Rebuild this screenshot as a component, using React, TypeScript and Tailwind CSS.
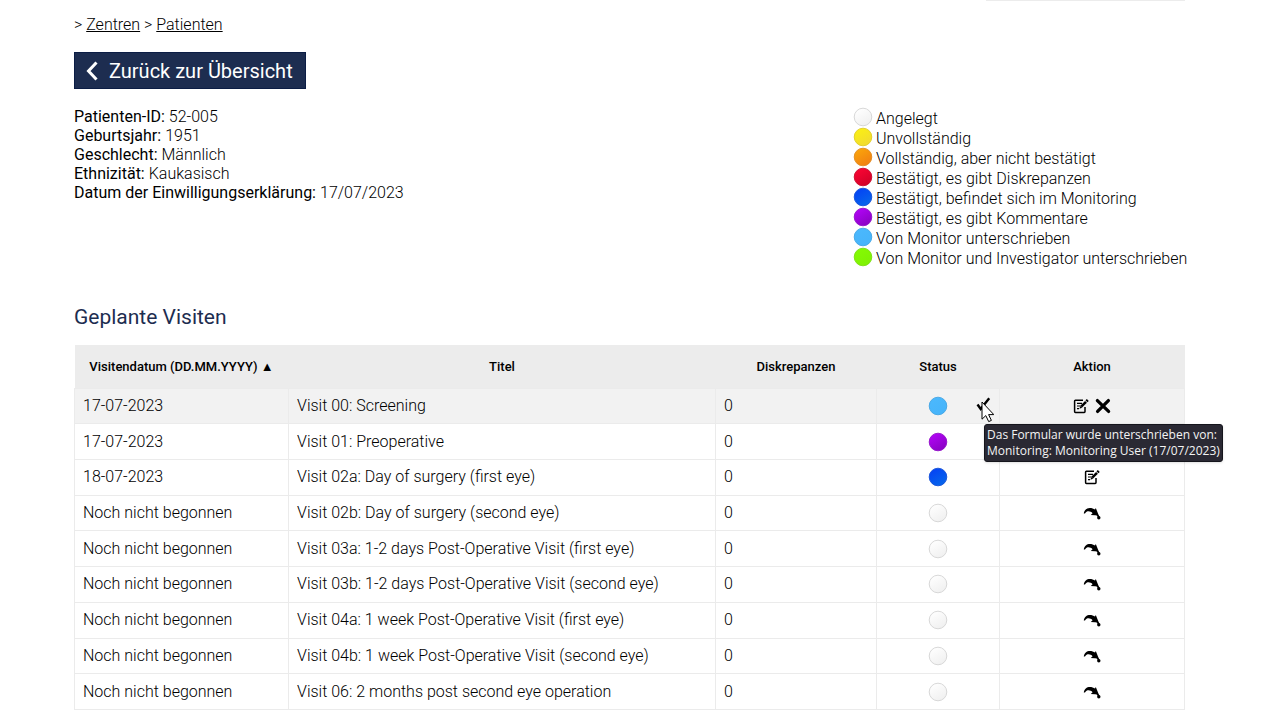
import { useId } from "react";

type Status = "created" | "incomplete" | "complete" | "discrepancy" | "monitoring" | "comments" | "monitor" | "signed";

const colors: Record<Status, [string, string, string]> = {
  created: ["#ffffff", "#efefef", "#d4d4d4"],
  incomplete: ["#fbf012", "#f0d932", "#e0cc25"],
  complete: ["#faa60a", "#f07d12", "#e08a20"],
  discrepancy: ["#fb0534", "#cf0127", "#c80a2c"],
  monitoring: ["#0541f5", "#0668ea", "#1450d8"],
  comments: ["#b304f8", "#8703c0", "#9210c8"],
  monitor: ["#4bb8fd", "#46b4fa", "#42a5e4"],
  signed: ["#84fb02", "#7ff004", "#7ade12"],
};

const legend: [Status, string][] = [
  ["created", "Angelegt"],
  ["incomplete", "Unvollständig"],
  ["complete", "Vollständig, aber nicht bestätigt"],
  ["discrepancy", "Bestätigt, es gibt Diskrepanzen"],
  ["monitoring", "Bestätigt, befindet sich im Monitoring"],
  ["comments", "Bestätigt, es gibt Kommentare"],
  ["monitor", "Von Monitor unterschrieben"],
  ["signed", "Von Monitor und Investigator unterschrieben"],
];

const patient = [
  ["Patienten-ID:", "52-005"],
  ["Geburtsjahr:", "1951"],
  ["Geschlecht:", "Männlich"],
  ["Ethnizität:", "Kaukasisch"],
  ["Datum der Einwilligungserklärung:", "17/07/2023"],
];

type Visit = { date: string; title: string; status: Status; signed?: boolean };
const pending = "Noch nicht begonnen";
const visits: Visit[] = [
  { date: "17-07-2023", title: "Visit 00: Screening", status: "monitor", signed: true },
  { date: "17-07-2023", title: "Visit 01: Preoperative", status: "comments" },
  { date: "18-07-2023", title: "Visit 02a: Day of surgery (first eye)", status: "monitoring" },
  { date: pending, title: "Visit 02b: Day of surgery (second eye)", status: "created" },
  { date: pending, title: "Visit 03a: 1-2 days Post-Operative Visit (first eye)", status: "created" },
  { date: pending, title: "Visit 03b: 1-2 days Post-Operative Visit (second eye)", status: "created" },
  { date: pending, title: "Visit 04a: 1 week Post-Operative Visit (first eye)", status: "created" },
  { date: pending, title: "Visit 04b: 1 week Post-Operative Visit (second eye)", status: "created" },
  { date: pending, title: "Visit 06: 2 months post second eye operation", status: "created" },
];

function Dot({ status }: { status: Status }) {
  const id = useId();
  const [from, to, edge] = colors[status];
  return (
    <svg viewBox="0 0 20 20" className="size-5 shrink-0" aria-hidden="true">
      <defs>
        <linearGradient id={id} x1="0.2" y1="0" x2="0.8" y2="1">
          <stop offset="0" stopColor={from} />
          <stop offset="1" stopColor={to} />
        </linearGradient>
      </defs>
      <circle cx="10" cy="10" r="8.8" fill={`url(#${id})`} stroke={edge} strokeWidth="0.9" />
    </svg>
  );
}

function EditIcon() {
  return (
    <svg viewBox="0 0 16 16" className="size-4" fill="none" stroke="#000" aria-hidden="true">
      <path d="M10 2.2H2.4Q1.6 2.2 1.6 3v10.6q0 .8.8.8h8.8q.8 0 .8-.8V9" strokeWidth="1.5" />
      <path d="M4 5.4h5M4 8h3.4M4 10.6h2" strokeWidth="1.2" />
      <path d="M8.2 8.6 13 3.8" strokeWidth="2.6" />
      <path d="m13.4 3.3 1.4-1.3" strokeWidth="2.8" />
      <path d="m6.4 10.8 1-2.8 1.8 1.7z" fill="#000" stroke="none" />
    </svg>
  );
}

function CrossIcon() {
  return (
    <svg viewBox="0 0 16 16" className="size-4" fill="none" stroke="#000" aria-hidden="true">
      <path d="M2.4 2.6 13.6 13.4M13.4 2.6 2.6 13.4" strokeWidth="3.3" strokeLinecap="round" />
    </svg>
  );
}

function ArrowIcon() {
  return (
    <svg viewBox="0 0 18 14" className="h-3.5 w-4.5" aria-hidden="true">
      <path d="M.8 7.500C1.200 4 3.800 2 6.800 2c2 0 3.800.600 5.200 1.600L12.800 2l3 7.500-8-.500 1.800-1.800C7.400 4.900 3.800 4.400 2 7.400z" />
      <path d="m13 8.500 2.600.5 1 2-1.400.500z" />
      <circle cx="15.800" cy="11.700" r="1.700" />
    </svg>
  );
}

function SignatureMark() {
  return (
    <div className="relative ml-7 h-5">
      <button
        type="button"
        aria-label="Unterschrieben"
        aria-describedby="signature-note"
        className="absolute top-0 left-0 block"
      >
        <svg viewBox="0 0 18 28" className="h-7 w-4.5" aria-hidden="true">
          <path d="m1.500 8.500 3.200 4.400L13.200 2.200" fill="none" stroke="#000" strokeWidth="2.400" />
          <path
            d="M6 6v17.200l3.800-3.600 2.900 6 2.700-1.200-2.800-5.800h5.200z"
            fill="#fff"
            stroke="#000"
            strokeWidth="1"
          />
        </svg>
      </button>
      <div
        id="signature-note"
        role="tooltip"
        className="absolute top-7 left-2 z-10 rounded-[3px] border border-[#15151c] bg-[#2a2933] px-0.5 py-0.5 text-left font-['Open_Sans',sans-serif] text-xs leading-4 font-normal whitespace-nowrap text-[#f4f4f4] shadow-sm"
      >
        Das Formular wurde unterschrieben von:
        <br />
        Monitoring: Monitoring User (17/07/2023)
      </div>
    </div>
  );
}

export default function App() {
  return (
    <div className="bg-white pr-[95px] pl-[74px] font-[Roboto,sans-serif] text-base font-light text-black">
      <div className="ml-auto h-px w-[199px] bg-[#ececec]" />

      <nav aria-label="Brotkrumen" className="mt-3 leading-6">
        &gt; <a href="#zentren" className="underline">Zentren</a> &gt;{" "}
        <a href="#patienten" className="underline">Patienten</a>
      </nav>

      <button
        type="button"
        className="mt-[15px] flex h-[37px] w-[232px] items-center gap-2.5 border border-[#0b1d45] bg-[#1d2d50] pl-2.5 text-[20px] font-normal whitespace-nowrap text-white"
      >
        <svg viewBox="0 0 14 20" className="h-5 w-3.5" fill="none" stroke="currentColor" aria-hidden="true">
          <path d="M11.500 1.500 3.500 10l8 8.500" strokeWidth="3" />
        </svg>
        Zurück zur Übersicht
      </button>

      <div className="mt-[18px] flex justify-between">
        <dl className="leading-[19px]">
          {patient.map(([label, value]) => (
            <div key={label} className="flex gap-1">
              <dt className="font-normal">{label}</dt>
              <dd>{value}</dd>
            </div>
          ))}
        </dl>
        <ul className="w-[332px]">
          {legend.map(([status, label]) => (
            <li key={status} className="flex h-5 items-start gap-[3px] leading-[23px] whitespace-nowrap">
              <Dot status={status} />
              {label}
            </li>
          ))}
        </ul>
      </div>

      <h2 className="mt-9 text-[21px] leading-7 font-normal text-[#1d2d50]">Geplante Visiten</h2>

      <table className="mt-3.5 h-[365px] w-full table-fixed border-collapse">
        <colgroup>
          <col className="w-[214px]" />
          <col />
          <col className="w-[161px]" />
          <col className="w-[123px]" />
          <col className="w-[185px]" />
        </colgroup>
        <thead className="bg-[#ececec] text-[13px]">
          <tr className="h-[43px]">
            <th className="font-medium">Visitendatum (DD.MM.YYYY) ▲</th>
            <th className="font-medium">Titel</th>
            <th className="font-medium">Diskrepanzen</th>
            <th className="font-medium">Status</th>
            <th className="font-medium">Aktion</th>
          </tr>
        </thead>
        <tbody>
          {visits.map((visit) => (
            <tr key={visit.title} className={visit.signed ? "bg-[#f2f2f2]" : "bg-white"}>
              <td className="border border-[#ebebeb] px-2">{visit.date}</td>
              <td className="border border-[#ebebeb] px-2">{visit.title}</td>
              <td className="border border-[#ebebeb] px-2">0</td>
              <td className="border border-[#ebebeb]">
                <div className="grid grid-cols-[1fr_auto_1fr] items-center">
                  <span />
                  <Dot status={visit.status} />
                  {visit.signed && <SignatureMark />}
                </div>
              </td>
              <td className="border border-[#ebebeb]">
                <div className="flex items-center justify-center gap-1.5">
                  {visit.status === "created" ? (
                    <button type="button" aria-label="Visite beginnen"><ArrowIcon /></button>
                  ) : (
                    <button type="button" aria-label="Bearbeiten"><EditIcon /></button>
                  )}
                  {visit.signed && <button type="button" aria-label="Löschen"><CrossIcon /></button>}
                </div>
              </td>
            </tr>
          ))}
        </tbody>
      </table>
    </div>
  );
}
